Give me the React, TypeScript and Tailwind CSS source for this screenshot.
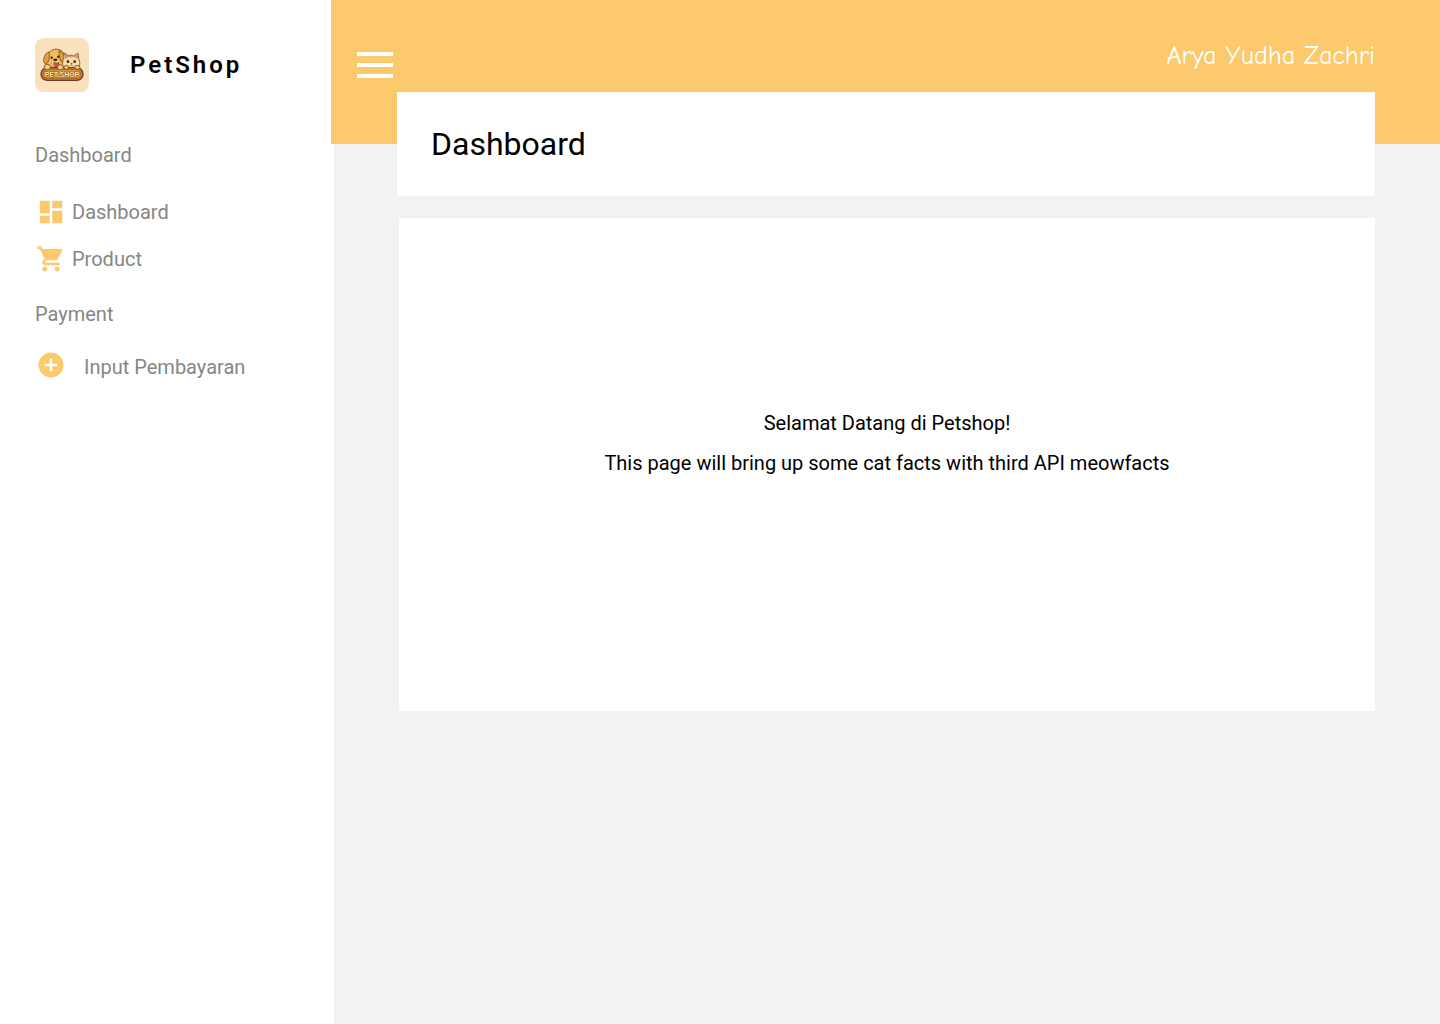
import type { ReactNode } from "react";
import { MdAddCircle, MdDashboard, MdShoppingCart } from "react-icons/md";

function Logo() {
  return (
    <svg viewBox="0 0 162 162" className="size-[54px] shrink-0" role="img" aria-label="Pet Shop logo">
      <rect width="162" height="162" rx="26" fill="#f9e1bd" />
      <g stroke="#7b4a22" strokeWidth="2.5" strokeLinejoin="round">
        <path d="M34 96C28 70 34 40 58 34c22-4 34 14 34 34v30z" fill="#f2bd60" />
        <path d="M42 42c-10 2-16 14-16 26 0 10 8 12 13 4 4-8 5-20 3-30z" fill="#dfa044" />
        <path d="M72 38c10 4 18 14 18 28 0 8-8 10-12 2-4-9-7-20-6-30z" fill="#dfa044" />
        <path d="M88 94c-8-14-5-26-2-32l2-17 14 9c5-2 10-2 14 0l13-9 2 17c6 12 4 24-4 32z" fill="#f8dcac" />
        <path d="M92 50l8 6-9 5zM126 50l-8 6 9 5z" fill="#e9a17b" strokeWidth="1" />
        <path d="M50 68c6-6 18-6 24 0 3 8-2 17-12 17s-14-9-12-17z" fill="#f8d994" strokeWidth="1" />
        <path d="M56 73c4 3 11 3 15 0 1 9-1 14-7 14-5 0-8-6-8-14z" fill="#e3484b" strokeWidth="2" />
      </g>
      <g fill="#3d2418">
        <circle cx="50" cy="59" r="3.5" />
        <circle cx="70" cy="56" r="3.5" />
        <ellipse cx="61" cy="66" rx="6" ry="4" />
        <circle cx="99" cy="71" r="4" />
        <circle cx="119" cy="71" r="4" />
        <path d="M106 76h7l-3 4z" />
      </g>
      <path d="M104 82q3 3 5-1 3 4 6 1M108 50v9M103 52v5M113 52v5" fill="none" stroke="#9b653c" strokeWidth="2" />
      <rect x="18" y="89" width="126" height="38" rx="19" fill="#c98330" stroke="#6b3d1c" strokeWidth="4" />
      <rect x="25" y="95" width="112" height="26" rx="13" fill="#e2a043" stroke="#965820" strokeWidth="2" />
      <g fill="#f5c77a" stroke="#7b4a22" strokeWidth="2.5">
        <ellipse cx="37" cy="87" rx="10" ry="8" />
        <ellipse cx="76" cy="88" rx="9" ry="8" />
        <ellipse cx="94" cy="88" rx="7" ry="6" />
        <ellipse cx="127" cy="88" rx="8" ry="6" />
      </g>
      <text
        x="81"
        y="116"
        textAnchor="middle"
        fontFamily="Roboto, sans-serif"
        fontSize="22"
        fontWeight="700"
        fill="#ffe7a5"
        stroke="#7b4a22"
        strokeWidth="3"
        paintOrder="stroke"
      >
        PET SHOP
      </text>
    </svg>
  );
}

function NavLink({ icon, gap, children }: { icon: ReactNode; gap: string; children: ReactNode }) {
  return (
    <a href="#" className={`flex h-[30px] items-center ${gap}`}>
      <span className="text-[30px] text-[#fdc96d]">{icon}</span>
      {children}
    </a>
  );
}

export default function App() {
  return (
    <div className="flex min-h-screen bg-white font-[Roboto,sans-serif] text-xl leading-6 text-black">
      <aside className="w-[331px] shrink-0 px-[35px] pt-[38px]">
        <div className="flex items-center gap-[41px]">
          <Logo />
          <span className="text-2xl font-semibold tracking-[3px]">PetShop</span>
        </div>
        <nav className="text-[#868686]">
          <h2 className="mt-[51px]">Dashboard</h2>
          <div className="mt-[30px] ml-px flex flex-col gap-[17px]">
            <NavLink gap="gap-1.5" icon={<MdDashboard />}>Dashboard</NavLink>
            <NavLink gap="gap-1.5" icon={<MdShoppingCart />}>Product</NavLink>
          </div>
          <h2 className="mt-7">Payment</h2>
          <div className="mt-6 ml-px">
            <NavLink gap="gap-[18px]" icon={<MdAddCircle />}>
              <span className="pt-1">Input Pembayaran</span>
            </NavLink>
          </div>
        </nav>
      </aside>

      <div className="flex min-w-0 flex-1 flex-col">
        <header className="flex h-36 items-start justify-between bg-[#fdc96d] pr-[65px] pl-[26px]">
          <button type="button" aria-label="Toggle menu" className="mt-[52px] flex w-9 flex-col gap-[7px]">
            <span className="h-1 w-full bg-white" />
            <span className="h-1 w-full bg-white" />
            <span className="h-1 w-full bg-white" />
          </button>
          <span className="mt-10 font-['Comic_Sans_MS','Comic_Neue',cursive] text-[26px] leading-8 text-white">
            Arya Yudha Zachri
          </span>
        </header>
        <main className="ml-[3px] flex-1 bg-[#f2f2f2] pr-[65px] pl-[63px]">
          <section className="relative -mt-[52px] flex h-[104px] items-center bg-white px-[34px]">
            <h1 className="text-[32px] leading-10">Dashboard</h1>
          </section>
          <section className="mt-[22px] ml-0.5 flex h-[493px] flex-col items-center justify-center gap-4 bg-white pb-11 text-center">
            <p>Selamat Datang di Petshop!</p>
            <p>This page will bring up some cat facts with third API meowfacts</p>
          </section>
        </main>
      </div>
    </div>
  );
}
